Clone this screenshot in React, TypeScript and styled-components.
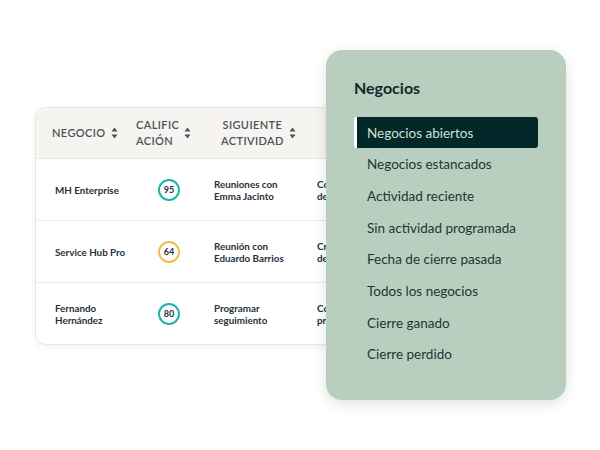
import styled, { createGlobalStyle } from "styled-components";

const Global = createGlobalStyle`
  html, body { margin: 0; padding: 0; background: #ffffff; }
  body { font-family: "Lato", "Noto Sans", sans-serif; }
`;

const Stage = styled.div`
  position: relative;
  width: 600px;
  height: 450px;
  overflow: hidden;
  background: #ffffff;
`;

const TableCard = styled.div`
  margin: 107px 0 0 35px;
  width: 360px;
  border: 1px solid #e6e6e3;
  border-radius: 11px;
  overflow: hidden;
  background: #ffffff;
  box-shadow: 0 2px 6px rgba(0, 0, 0, 0.06);
`;

const cols = "90px 75px 105px 1fr";

const HeadRow = styled.div`
  display: grid;
  grid-template-columns: ${cols};
  height: 50px;
  align-items: center;
  background: #f5f4f0;
  border-bottom: 1px solid #e8e7e2;
`;

const HeadCell = styled.div<{ $pl: number; $center?: boolean }>`
  display: flex;
  align-items: center;
  gap: 5px;
  padding-left: ${(p) => p.$pl}px;
  font-size: 11px;
  font-weight: 600;
  letter-spacing: 0.4px;
  line-height: 16px;
  color: #4b5257;
  text-align: ${(p) => (p.$center ? "center" : "left")};
`;

const Row = styled.div<{ $last?: boolean }>`
  display: grid;
  grid-template-columns: ${cols};
  height: 61px;
  align-items: center;
  border-bottom: ${(p) => (p.$last ? "none" : "1px solid #ebebe8")};
`;

const Cell = styled.div<{ $pl: number }>`
  padding-left: ${(p) => p.$pl}px;
  font-size: 9.8px;
  font-weight: 700;
  line-height: 12px;
  color: #26323a;
  white-space: nowrap;
  overflow: hidden;
`;

const Score = styled.div<{ $color: string }>`
  width: 18px;
  height: 18px;
  margin-left: 32px;
  border: 2px solid ${(p) => p.$color};
  border-radius: 50%;
  display: flex;
  align-items: center;
  justify-content: center;
  font-size: 9px;
  font-weight: 700;
  color: #26323a;
`;

const Panel = styled.div`
  position: absolute;
  left: 326px;
  top: 50px;
  width: 240px;
  height: 350px;
  box-sizing: border-box;
  padding: 28px 28px 0 28px;
  background: #b8cfbf;
  border-radius: 16px;
  box-shadow: 0 4px 14px rgba(0, 0, 0, 0.12);
`;

const PanelTitle = styled.div`
  font-size: 16px;
  font-weight: 700;
  color: #0f2a2a;
  line-height: 20px;
  margin-bottom: 19px;
`;

const MenuList = styled.div`
  display: flex;
  flex-direction: column;
  gap: 0.7px;
`;

const MenuItem = styled.div<{ $active?: boolean }>`
  height: 31px;
  display: flex;
  align-items: center;
  box-sizing: border-box;
  padding-left: 10px;
  font-size: 13.5px;
  color: ${(p) => (p.$active ? "#cfe0d5" : "#1c3735")};
  background: ${(p) => (p.$active ? "#03282a" : "transparent")};
  border-left: 3px solid ${(p) => (p.$active ? "#ffffff" : "transparent")};
  border-radius: ${(p) => (p.$active ? "2px 3px 3px 2px" : "0")};
`;

function SortIcon() {
  return (
    <svg width="7" height="12" viewBox="0 0 7 12">
      <path d="M3.5 0.5 L6.5 4.5 L0.5 4.5 Z" fill="#4b5257" />
      <path d="M3.5 11.5 L6.5 7.5 L0.5 7.5 Z" fill="#4b5257" />
    </svg>
  );
}

const rows = [
  { name: ["MH Enterprise"], score: 95, color: "#21b3ab", act: ["Reuniones con", "Emma Jacinto"], extra: ["Co", "de"] },
  { name: ["Service Hub Pro"], score: 64, color: "#f1bd52", act: ["Reunión con", "Eduardo Barrios"], extra: ["Cr", "de"] },
  { name: ["Fernando", "Hernández"], score: 80, color: "#21b3ab", act: ["Programar", "seguimiento"], extra: ["Co", "pr"] },
];

const menu = [
  "Negocios abiertos",
  "Negocios estancados",
  "Actividad reciente",
  "Sin actividad programada",
  "Fecha de cierre pasada",
  "Todos los negocios",
  "Cierre ganado",
  "Cierre perdido",
];

function Lines({ items }: { items: string[] }) {
  return (
    <>
      {items.map((t, i) => (
        <div key={i}>{t}</div>
      ))}
    </>
  );
}

export default function App() {
  return (
    <Stage>
      <Global />
      <TableCard>
        <HeadRow>
          <HeadCell $pl={16}>
            NEGOCIO <SortIcon />
          </HeadCell>
          <HeadCell $pl={10}>
            <div>
              CALIFIC
              <br />
              ACIÓN
            </div>
            <SortIcon />
          </HeadCell>
          <HeadCell $pl={20} $center>
            <div>
              SIGUIENTE
              <br />
              ACTIVIDAD
            </div>
            <SortIcon />
          </HeadCell>
          <HeadCell $pl={11} />
        </HeadRow>
        {rows.map((r, i) => (
          <Row key={i} $last={i === rows.length - 1}>
            <Cell $pl={19}>
              <Lines items={r.name} />
            </Cell>
            <Cell $pl={0}>
              <Score $color={r.color}>{r.score}</Score>
            </Cell>
            <Cell $pl={13}>
              <Lines items={r.act} />
            </Cell>
            <Cell $pl={11}>
              <Lines items={r.extra} />
            </Cell>
          </Row>
        ))}
      </TableCard>
      <Panel>
        <PanelTitle>Negocios</PanelTitle>
        <MenuList>
          {menu.map((m, i) => (
            <MenuItem key={m} $active={i === 0}>
              {m}
            </MenuItem>
          ))}
        </MenuList>
      </Panel>
    </Stage>
  );
}
